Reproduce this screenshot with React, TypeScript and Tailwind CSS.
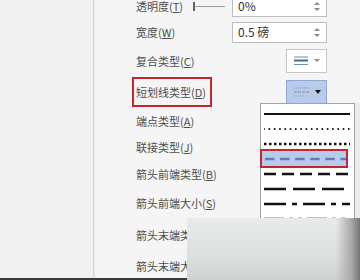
import React from "react";

const FONT = { fontFamily: '"Noto Sans CJK SC", "Noto Sans", sans-serif' };

const Label = ({ text, k, boxed }: { text: string; k: string; boxed?: boolean }) => (
  <span
    className={
      boxed
        ? "-ml-[4px] flex h-[30px] w-[80px] items-center border-2 border-[#c3272b] pl-[2px] text-[11px] leading-[12px] text-[#4d4d4d]"
        : "text-[11px] leading-[12px] text-[#4d4d4d]"
    }
  >
    {text}
    {k && (
      <>
        (<span className="underline">{k}</span>)
      </>
    )}
  </span>
);

const Spin = ({ value, h }: { value: string; h: string }) => (
  <div className={`flex w-[95px] items-center justify-between border border-[#bdbdbd] bg-white pl-[5px] pr-[6px] ${h}`}>
    <span className="text-[12px] leading-[14px] text-[#333]">{value}</span>
    <div className="flex flex-col items-center gap-[3px]">
      <span className="h-0 w-0 border-x-[3px] border-b-[3px] border-x-transparent border-b-[#8a8a8a]" />
      <span className="h-0 w-0 border-x-[3px] border-t-[3px] border-x-transparent border-t-[#8a8a8a]" />
    </div>
  </div>
);

const patterns: { dash?: string; cap?: "round" | "butt"; w: number; color?: string }[] = [
  { w: 2 },
  { dash: "0 5.3", cap: "round", w: 2 },
  { dash: "2.5 2.5", w: 2.5 },
  { dash: "10 6", w: 2.5, color: "#5f7fb3" },
  { dash: "12 6", w: 2.5 },
  { dash: "22 7", w: 2.5 },
  { dash: "22 6 5 6", w: 2.5 },
  { dash: "20 5 4 5 4 5", w: 2.5 },
];

const App = () => {
  return (
    <div style={FONT} className="relative flex h-[280px] w-[360px] overflow-hidden bg-[#f5f5f5]">
      <div className="w-[93px] bg-[#f1f1f1]" />
      <div className="w-[1px] bg-[#d4d4d4]" />
      <div className="w-[1px] bg-[#e9e9e9]" />

      <div className="relative flex flex-1 flex-col pl-[41px] pr-[33px] -mt-[6px]">
        <div className="flex h-[24px] items-center">
          <Label text="透明度" k="T" />
          <div className="ml-auto mr-[7px] flex w-[32px] items-center">
            <span className="h-[9px] w-[2px] bg-[#666]" />
            <span className="h-[1px] flex-1 bg-[#9a9a9a]" />
          </div>
          <Spin value="0%" h="h-[21px]" />
        </div>

        <div className="flex h-[28px] items-center">
          <Label text="宽度" k="W" />
          <div className="ml-auto">
            <Spin value="0.5 磅" h="h-[21px]" />
          </div>
        </div>

        <div className="flex h-[29px] items-center">
          <Label text="复合类型" k="C" />
          <div className="ml-auto flex h-[24px] w-[41px] items-center gap-[6px] border border-[#c6c6c6] bg-white pl-[7px]">
            <svg width="14" height="10" viewBox="0 0 14 10">
              <line x1="0" y1="1" x2="14" y2="1" stroke="#6e8fae" strokeWidth="1" />
              <line x1="0" y1="4.5" x2="14" y2="4.5" stroke="#3d6d8e" strokeWidth="2" />
              <line x1="0" y1="8.5" x2="14" y2="8.5" stroke="#6e8fae" strokeWidth="1" />
            </svg>
            <span className="h-0 w-0 border-x-[3px] border-t-[3px] border-x-transparent border-t-[#8a8a8a]" />
          </div>
        </div>

        <div className="flex h-[33px] items-center">
          <Label text="短划线类型" k="D" boxed />
          <div className="ml-auto flex h-[24px] w-[41px] items-center gap-[6px] border border-[#8fa8d2] bg-[#b8cbea] pl-[7px]">
            <svg width="15" height="12" viewBox="0 0 15 12">
              <line x1="0" y1="2" x2="15" y2="2" stroke="#7d8ea8" strokeWidth="1" strokeDasharray="1 1" />
              <line x1="0" y1="6" x2="15" y2="6" stroke="#7d8ea8" strokeWidth="1" strokeDasharray="3 1" />
              <line x1="0" y1="10" x2="15" y2="10" stroke="#7d8ea8" strokeWidth="1" strokeDasharray="1 2" />
            </svg>
            <span className="h-0 w-0 border-x-[3.5px] border-t-[4px] border-x-transparent border-t-[#111]" />
          </div>
        </div>

        <div className="flex h-[25px] items-center">
          <Label text="端点类型" k="A" />
        </div>
        <div className="flex h-[27px] items-center">
          <Label text="联接类型" k="J" />
        </div>
        <div className="flex h-[28px] items-center">
          <Label text="箭头前端类型" k="B" />
        </div>
        <div className="flex h-[30px] items-center">
          <Label text="箭头前端大小" k="S" />
        </div>
        <div className="flex h-[33px] items-center">
          <Label text="箭头末端类型" k="" />
        </div>
        <div className="flex h-[29px] items-center">
          <Label text="箭头末端大小" k="" />
        </div>
      </div>

      {/* dash type dropdown */}
      <div className="absolute left-[260px] top-[103px] h-[190px] w-[95px] border border-[#a3a3a3] bg-white pt-[2px]">
        {patterns.map((p, i) => (
          <div
            key={i}
            className={
              i === 3
                ? "-ml-[1px] flex h-[19px] w-[88px] items-center border-2 border-[#c3272b] bg-[#b8cbea] pl-[3px] -my-[2px]"
                : "flex h-[15px] items-center pl-[3px]"
            }
          >
            <svg width="86" height="4" viewBox="0 0 86 4">
              <line
                x1="0"
                y1="2"
                x2="86"
                y2="2"
                stroke={p.color ?? "#111"}
                strokeWidth={p.w}
                strokeDasharray={p.dash}
                strokeLinecap={p.cap ?? "butt"}
              />
            </svg>
          </div>
        ))}
      </div>
      <div className="absolute right-0 top-[103px] h-[190px] w-[5px] bg-[#ececec]" />

      <div className="absolute bottom-0 left-0 h-[2px] w-full bg-[#3a3a3a]" />

      {/* grey overlay block */}
      <div className="absolute bottom-0 left-[187px] right-0 top-[218px] bg-[linear-gradient(to_bottom,#e9eaea_0%,#dedfdf_60%,#cfd0d0_100%)]">
        <div className="h-full w-full bg-[linear-gradient(to_right,transparent_0%,transparent_86%,#a9a9a9_95%,#767676_100%)]" />
      </div>
    </div>
  );
};

export default App;
